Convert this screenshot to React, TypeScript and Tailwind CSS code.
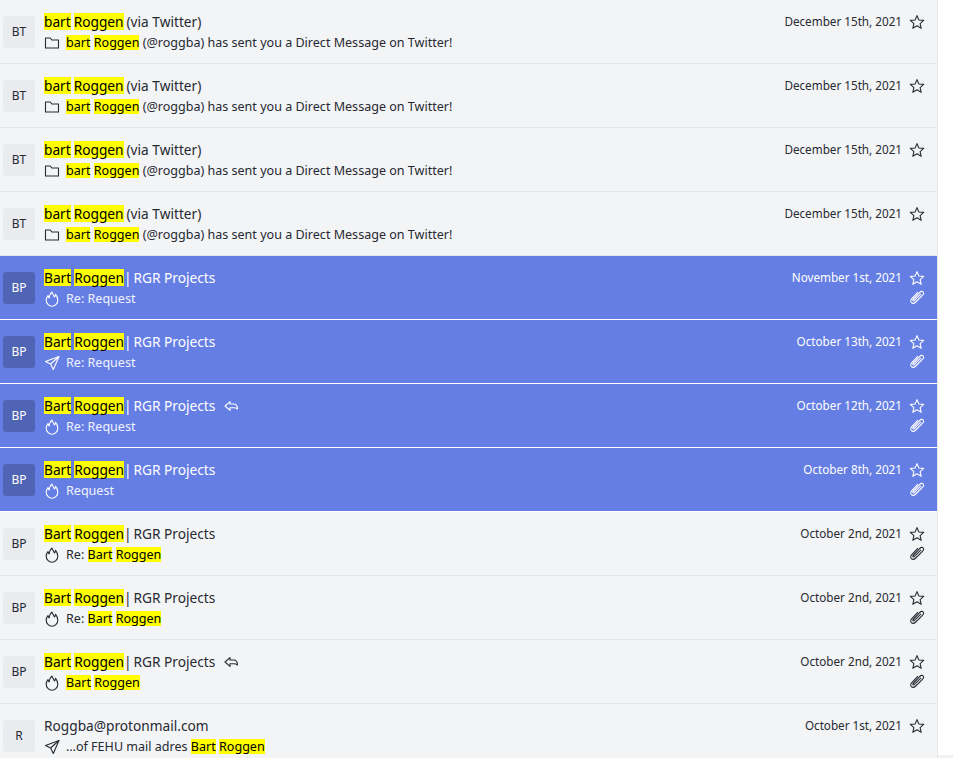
type Row = {
  initials: string;
  sender: string[];
  rest: string;
  piped?: boolean;
  replied?: boolean;
  icon: "folder" | "flame" | "send";
  subject: string[];
  date: string;
  clip?: boolean;
  selected?: boolean;
};

const TWITTER_SUBJECT = ["<bart>", " ", "<Roggen>", " (@roggba) has sent you a Direct Message on Twitter!"];
const BP = ["Bart", "Roggen"];

const twitterRow: Row = {
  initials: "BT",
  sender: ["bart", "Roggen"],
  rest: "(via Twitter)",
  icon: "folder",
  subject: TWITTER_SUBJECT,
  date: "December 15th, 2021",
};

const bpRow = { initials: "BP", sender: BP, rest: "RGR Projects", piped: true };

const ROWS: Row[] = [
  twitterRow,
  twitterRow,
  twitterRow,
  twitterRow,
  { ...bpRow, icon: "flame", subject: ["Re: Request"], date: "November 1st, 2021", clip: true, selected: true },
  { ...bpRow, icon: "send", subject: ["Re: Request"], date: "October 13th, 2021", clip: true, selected: true },
  { ...bpRow, replied: true, icon: "flame", subject: ["Re: Request"], date: "October 12th, 2021", clip: true, selected: true },
  { ...bpRow, icon: "flame", subject: ["Request"], date: "October 8th, 2021", clip: true, selected: true },
  { ...bpRow, icon: "flame", subject: ["Re: ", "<Bart>", " ", "<Roggen>"], date: "October 2nd, 2021", clip: true },
  { ...bpRow, icon: "flame", subject: ["Re: ", "<Bart>", " ", "<Roggen>"], date: "October 2nd, 2021", clip: true },
  { ...bpRow, replied: true, icon: "flame", subject: ["<Bart>", " ", "<Roggen>"], date: "October 2nd, 2021", clip: true },
  { initials: "R", sender: [], rest: "Roggba@protonmail.com", icon: "send", subject: ["…of FEHU mail adres ", "<Bart>", " ", "<Roggen>"], date: "October 1st, 2021" },
];

// Outline icons, all on a 16 box
const ICON_PATHS = {
  folder: ["M1.5 3 H6.3 L7.8 5 H14.5 V13 H1.5 Z"],
  flame: [
    "M8 1 C8.3 3.2 10 4 10.4 6 C11.2 5.5 11.6 4.6 11.6 3.4 C13.1 5.2 13.8 7.2 13.8 9.2 A5.8 6 0 0 1 2.2 9.2 C2.2 7.4 3 5.8 4 4.6 C4.2 5.6 4.5 6.2 5.1 6.8 C5.2 4.5 6.4 2.4 8 1 Z",
  ],
  send: ["M15 1.5 L1.5 6.5 L6.6 9 L9.3 14.5 Z", "M15 1.5 L6.6 9"],
  star: ["M8 1.6 L9.9 6 L14.7 6.4 L11.1 9.6 L12.2 14.3 L8 11.8 L3.8 14.3 L4.9 9.6 L1.3 6.4 L6.1 6 Z"],
  clip: [
    "M12 4.8 L5.2 11.6 C4.4 12.4 3.3 11.4 4.1 10.5 L10.8 3.4 C12 2.2 13.6 2.1 14.2 3 C14.9 3.9 14.6 5.2 13.4 6.4 L6.8 13 C5.3 14.5 3.4 14.6 2.4 13.6 C1.4 12.6 1.5 10.8 3 9.3 L9 3.2",
  ],
  reply: ["M2 8 L7 3.6 V6 H10.5 C13 6 14.5 7.6 14.5 11 C13.5 10 12.5 9.8 10.5 9.8 H7 V12.4 Z"],
};

function Icon({ name, className }: { name: keyof typeof ICON_PATHS; className?: string }) {
  return (
    <svg viewBox="0 0 16 16" fill="none" stroke="currentColor" strokeWidth={1.1} strokeLinejoin="round" className={className}>
      {ICON_PATHS[name].map((d) => (
        <path key={d} d={d} />
      ))}
    </svg>
  );
}

function Mark({ children, tall }: { children: string; tall?: boolean }) {
  return (
    <mark className={tall ? "inline-block bg-[#ffff00] leading-[17px] text-black" : "inline-block bg-[#ffff00] leading-[15px] text-black"}>
      {children}
    </mark>
  );
}

function MailRow({ row }: { row: Row }) {
  return (
    <div
      className={
        row.selected
          ? "flex h-16 border-b border-white bg-[#657ee4] pl-[3px] pr-3 text-white"
          : "flex h-16 border-b border-[#e5e7eb] bg-[#f3f4f6] pl-[3px] pr-3 text-[#262a33]"
      }
    >
      <div
        className={
          row.selected
            ? "mt-4 flex h-8 w-8 shrink-0 items-center justify-center rounded-[3px] bg-[#5064b6] text-[12px] text-white"
            : "mt-4 flex h-8 w-8 shrink-0 items-center justify-center rounded-[3px] bg-[#e9ebef] text-[12px] text-[#262a33]"
        }
      >
        {row.initials}
      </div>
      <div className="ml-[9px] min-w-0 flex-1 pt-3">
        <div className="flex h-5 items-center text-[13.7px] leading-5">
          {row.sender.map((word) => (
            <span key={word} className="mr-[3px]">
              <Mark tall>{word}</Mark>
            </span>
          ))}
          {row.piped && <span className="ml-[-3px] mr-[2px]">|</span>}
          <span>{row.rest}</span>
          {row.replied && <Icon name="reply" className="ml-2 h-4 w-4" />}
        </div>
        <div className="mt-px flex h-5 items-center text-[12.55px] leading-5">
          <Icon name={row.icon} className="mr-[6px] h-4 w-4 shrink-0" />
          <span className={row.selected ? "text-white/90" : ""}>
            {row.subject.map((part, i) =>
              part.startsWith("<") ? <Mark key={i}>{part.slice(1, -1)}</Mark> : <span key={i}>{part}</span>,
            )}
          </span>
        </div>
      </div>
      <div className="flex flex-col items-end pt-3">
        <div className="flex h-5 items-center">
          <span className="text-[11.7px]">{row.date}</span>
          <Icon name="star" className="ml-[7px] h-4 w-4" />
        </div>
        {row.clip && (
          <div className="flex h-[18px] items-center">
            <Icon name="clip" className="h-4 w-4" />
          </div>
        )}
      </div>
    </div>
  );
}

export default function App() {
  return (
    <div className="flex h-[758px] w-[953px] overflow-hidden bg-white font-['Noto_Sans',sans-serif]">
      <div className="w-[937px] shrink-0">
        {ROWS.map((row, i) => (
          <MailRow key={i} row={row} />
        ))}
      </div>
      <div className="flex flex-1 flex-col justify-end border-l border-[#e5e7eb]">
        <div className="h-[3px] bg-[#f0f1f3]" />
      </div>
    </div>
  );
}
